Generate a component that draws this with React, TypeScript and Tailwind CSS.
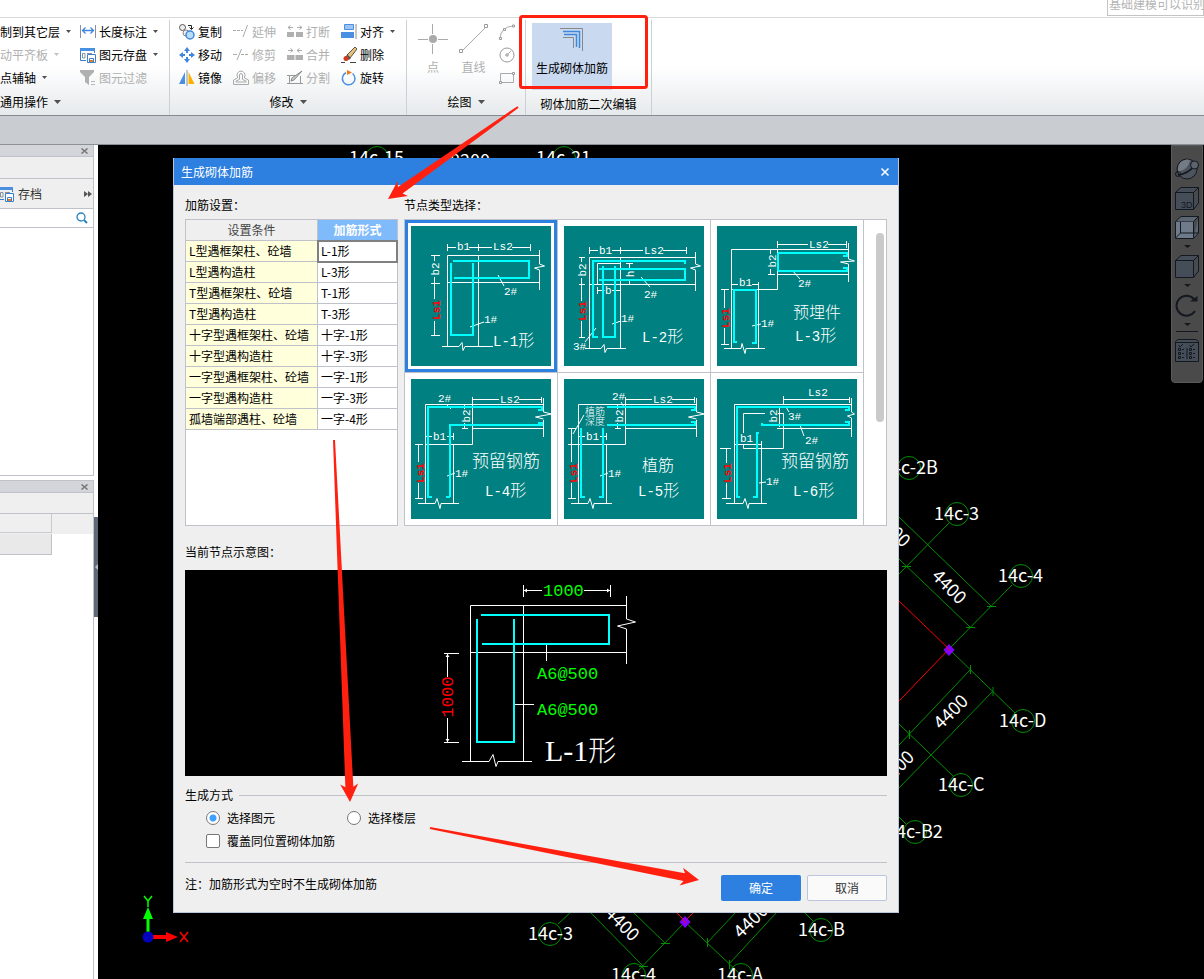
import React, { useState } from "react";

type Label = { x: number; y: number; t: string; size?: number; rot?: boolean; color?: string };

type NodeType = {
  id: string;
  lines: string;
  bars: string;
  labels: Label[];
};

const conditions = [
  ["L型遇框架柱、砼墙", "L-1形"],
  ["L型遇构造柱", "L-3形"],
  ["T型遇框架柱、砼墙", "T-1形"],
  ["T型遇构造柱", "T-3形"],
  ["十字型遇框架柱、砼墙", "十字-1形"],
  ["十字型遇构造柱", "十字-3形"],
  ["一字型遇框架柱、砼墙", "一字-1形"],
  ["一字型遇构造柱", "一字-3形"],
  ["孤墙端部遇柱、砼墙", "一字-4形"],
];

const nodeTypes: NodeType[] = [
  {
    id: "L-1形",
    lines:
      "M36.5 21.5H45M58 21.5H81M101 21.5H119.5M36.5 18v7M67.5 18v7M119.5 18v7M128.5 29.5H36.5V120.5M67.5 29.5V120.5M36.5 56.5H128.5M128.5 24V38M128.5 44V64M31 120.5H48l3 -4l1 8l2 -4H82M128.5 38l5 2l-10 2l5 2M20 29.5h9M20 57.5h9M20 109.5h9M23.5 29.5V35M23.5 51V73M23.5 95V109.5M87 49l6 11M59 101l14 -5",
    bars: "M42 35H118V52H43M40 37V109H62V37",
    labels: [
      { x: 46, y: 24, t: "b1" },
      { x: 82, y: 24, t: "Ls2" },
      { x: 24, y: 43, t: "b2", rot: true },
      { x: 25, y: 84, t: "Ls1", rot: true, color: "#f00" },
      { x: 93, y: 69, t: "2#" },
      { x: 73, y: 97, t: "1#" },
      { x: 82, y: 120, t: "L-1形", size: 16 },
    ],
  },
  {
    id: "L-2形",
    lines:
      "M25.5 24.5H34M48 24.5H79M99 24.5H122.5M25.5 21v7M56.5 21v7M122.5 21v7M131.5 31.5H25.5V122.5M56.5 31.5V122.5M25.5 58.5H131.5M33.5 58.5V37.5H56.5M131.5 26V38M131.5 44V65M131.5 38l5 2l-10 2l5 2M21 122.5H37l3 -4l1 8l2 -4H62M15 31.5h6M15 58.5h6M15 111.5h6M17.5 31.5V36M17.5 52V75M17.5 95V111M62 37.5h7M65.5 37.5v5M65.5 53v5M33.5 61v7M33.5 64.5h7M48 64.5h8M77 51l9 10M48 98l9 -3M32 102l-11 14",
    bars: "M34 111H29V35H121V38M35 43H121V54H35M39 40V111H51V40",
    labels: [
      { x: 35, y: 28, t: "b1" },
      { x: 80, y: 28, t: "Ls2" },
      { x: 18, y: 44, t: "b2", rot: true },
      { x: 66, y: 48, t: "h", rot: true },
      { x: 41, y: 68, t: "b" },
      { x: 18, y: 85, t: "Ls1", rot: true, color: "#f00" },
      { x: 80, y: 72, t: "2#" },
      { x: 57, y: 96, t: "1#" },
      { x: 9, y: 124, t: "3#" },
      { x: 78, y: 116, t: "L-2形", size: 16 },
    ],
  },
  {
    id: "L-3形",
    lines:
      "M60.5 18.5H91M111 18.5H129.5M60.5 15v7M129.5 15v7M131.5 23.5H14.5V122.5M60.5 23.5V63.5M60.5 48.5H131.5M131.5 17V33M131.5 38V56M131.5 33l6 2l-14 1l8 2M14.5 63.5H60.5M41.5 56V122.5M14.5 58.5H21M35 58.5h6M51 23.5h7M51 48.5h7M53.5 23.5V28M53.5 43v5M7 122.5H24l1 -5l3 10l1 -5H48M4 63.5h8M4 118.5h8M7.5 63.5V82M7.5 102V118M75 44l8 9M35 100l9 -2",
    bars: "M61 27H130V30H126M61 45H130V42H126M61 27V45M20 116H17V64H39V117H35",
    labels: [
      { x: 92, y: 22, t: "Ls2" },
      { x: 55, y: 35, t: "b2", rot: true },
      { x: 22, y: 60, t: "b1" },
      { x: 81, y: 61, t: "2#" },
      { x: 44, y: 101, t: "1#" },
      { x: 8, y: 92, t: "Ls1", rot: true, color: "#f00" },
      { x: 76, y: 92, t: "预埋件", size: 16 },
      { x: 78, y: 115, t: "L-3形", size: 16 },
    ],
  },
  {
    id: "L-4形",
    lines:
      "M61.5 20.5H88M108 20.5H130.5M130.5 18v6M132.5 25.5H14.5V124.5M61.5 18V65.5M61.5 49.5H132.5M132.5 19V33M132.5 41V58M132.5 33l8 2l-16 3l8 2M14.5 65.5H61.5M42.5 65.5V124.5M14.5 57.5H21M36 57.5h6M42.5 54v7M51 49.5h6M53.5 25.5V30M53.5 44v5M7 124.5H24l2 -5l3 10l1 -5H48M4 65.5h8M4 119.5h8M7.5 65.5V83M7.5 104V119M35 25l5 5M36 97l8 -3",
    bars: "M21 118H17V28H131V31H127M39 118H35M131 44H127M39 118V46H131V43",
    labels: [
      { x: 89, y: 24, t: "Ls2" },
      { x: 55, y: 37, t: "b2", rot: true },
      { x: 22, y: 61, t: "b1" },
      { x: 27, y: 23, t: "2#" },
      { x: 44, y: 98, t: "1#" },
      { x: 9, y: 94, t: "Ls1", rot: true, color: "#f00" },
      { x: 61, y: 88, t: "预留钢筋", size: 17 },
      { x: 74, y: 117, t: "L-4形", size: 16 },
    ],
  },
  {
    id: "L-5形",
    lines:
      "M61.5 20.5H88M108 20.5H130.5M130.5 18v6M132.5 25.5H14.5V124.5M61.5 18V65.5M61.5 49.5H132.5M132.5 19V33M132.5 41V58M132.5 33l8 2l-16 3l8 2M4 65.5H61.5M42.5 65.5V124.5M14.5 57.5H21M36 57.5h6M42.5 54v7M51 49.5h6M53.5 25.5V30M53.5 44v5M7 124.5H24l2 -5l3 10l1 -5H48M4 49.5h8M4 119.5h8M7.5 49.5V83M7.5 104V119M57 23l3 5M20 36l-11 19M36 97l8 -3",
    bars: "M43 28H131V31H127M43 46H131V43H127M17 49V118H21M39 49V118H35",
    labels: [
      { x: 89, y: 24, t: "Ls2" },
      { x: 55, y: 37, t: "b2", rot: true },
      { x: 22, y: 61, t: "b1" },
      { x: 48, y: 21, t: "2#" },
      { x: 44, y: 98, t: "1#" },
      { x: 21, y: 36, t: "植筋", size: 10 },
      { x: 21, y: 46, t: "深度", size: 10 },
      { x: 9, y: 94, t: "Ls1", rot: true, color: "#f00" },
      { x: 78, y: 92, t: "植筋", size: 16 },
      { x: 74, y: 117, t: "L-5形", size: 16 },
    ],
  },
  {
    id: "L-6形",
    lines:
      "M66.5 20.5H132.5M66.5 17v8M132.5 18v6M134.5 25.5H17.5V124.5M60 49.5H134.5M134.5 19V33M134.5 39V58M134.5 33l3 2l-7 2l4 2M48 34.5H26.5V54M26.5 65V69.5H66.5V34.5H61M44.5 62V124.5M17.5 65.5H44.5M62.5 28V48M9 124.5H26l2 -5l3 10l1 -5H50M3 69.5h11M5 119.5h9M9.5 69.5V84M9.5 104V119M69 28l3 5M83 46l4 11M42 104l7 -1",
    bars: "M23 118H20V28H132V31H128M45 44V46H132V43H128M42 54H40V118H36",
    labels: [
      { x: 91, y: 17, t: "Ls2" },
      { x: 56, y: 37, t: "b2", rot: true },
      { x: 23, y: 63, t: "b1" },
      { x: 71, y: 41, t: "3#" },
      { x: 88, y: 65, t: "2#" },
      { x: 49, y: 106, t: "1#" },
      { x: 10, y: 94, t: "Ls1", rot: true, color: "#f00" },
      { x: 64, y: 88, t: "预留钢筋", size: 17 },
      { x: 76, y: 117, t: "L-6形", size: 16 },
    ],
  },
];

/* grid axis bubbles of the model: centre of the circle, then the start of the text */
const bubbles: [number, number, number, string][] = [
  [377, 158, 349, "14c-15"],
  [564, 158, 536, "14c-21"],
  [909, 468, 881, "14c-2B"],
  [957, 514, 934, "14c-3"],
  [1021, 576, 998, "14c-4"],
  [1023, 721, 999, "14c-D"],
  [961, 785, 938, "14c-C"],
  [915, 832, 886, "14c-B2"],
  [550, 934, 528, "14c-3"],
  [634, 975, 611, "14c-4"],
  [741, 975, 717, "14c-A"],
  [821, 930, 798, "14c-B"],
];

const spans: [number, number, number][] = [
  [949, 587, 45],
  [951, 712, -45],
  [893, 530, 45],
  [897, 768, -45],
  [622, 924, 45],
  [751, 921, -45],
];

function Caret({ off, small }: { off?: boolean; small?: boolean }) {
  return (
    <svg width={small ? 5 : 7} height={small ? 3 : 4} viewBox="0 0 7 4" className="shrink-0">
      <path d="M0 0H7L3.5 4Z" fill={off ? "#c0c0c0" : "#505050"} />
    </svg>
  );
}

function Icon({ children, size = 16 }: { children: React.ReactNode; size?: number }) {
  return (
    <svg width={size} height={size} viewBox={`0 0 ${size} ${size}`} fill="none" className="shrink-0">
      {children}
    </svg>
  );
}

function Tool({ icon, text, caret, off }: { icon?: React.ReactNode; text: string; caret?: boolean; off?: boolean }) {
  return (
    <button type="button" disabled={off} className="flex h-[23px] items-center whitespace-nowrap disabled:text-[#b0b0b0]">
      {icon && <span className="mr-[3px]">{icon}</span>}
      {text}
      {caret && (
        <span className="ml-[6px]">
          <Caret off={off} small />
        </span>
      )}
    </button>
  );
}

function GroupLabel({ text, caret }: { text: string; caret?: boolean }) {
  return (
    <div className="flex h-[26px] items-center justify-center gap-[6px] whitespace-nowrap">
      {text}
      {caret && <Caret />}
    </div>
  );
}

const SaveIcon = () => (
  <Icon>
    <path d="M.5 13.5V1.5H14.5V6M.5 13.5H6" stroke="#3a7fd0" />
    <path d="M0 1H15V4H0Z" fill="#4a90e2" />
    <path d="M2.5 6.5H5V11H2.5ZM7 6.5H12" stroke="#8a9099" />
    <path d="M7.5 7.5H15.5V15.5H7.5Z" fill="#fff" stroke="#3a7fd0" />
    <path d="M9.5 11.5h4v4h-4Z" fill="#fff" stroke="#3a7fd0" />
    <path d="M10 13h3v2h-3Z" fill="#f07818" />
  </Icon>
);

function Ribbon() {
  return (
    <div className="flex h-[99px] border-t border-b border-t-[#d9d9d9] border-b-[#868b93] bg-linear-to-b from-white from-50% to-[#e6eaec] pt-[2px]">
      <section className="w-[170px] border-r border-[#cdd0d3]">
        <div className="grid grid-cols-[80px_auto] justify-items-start">
          <Tool text="制到其它层" caret />
          <Tool
            text="长度标注"
            caret
            icon={
              <Icon>
                <path d="M.5 1V14M15.5 1V14" stroke="#8a9099" />
                <path d="M3 6.5H13M5.5 3.5L2.5 6.5L5.5 9.5M10.5 3.5L13.5 6.5L10.5 9.5" stroke="#3f87dc" strokeWidth="1.3" />
              </Icon>
            }
          />
          <Tool text="动平齐板" caret off />
          <Tool text="图元存盘" caret icon={<SaveIcon />} />
          <Tool text="点辅轴" caret />
          <Tool
            text="图元过滤"
            off
            icon={
              <Icon>
                <path d="M0 0H14V2L9 7V15L5 12V7L0 2Z" fill="#b0b0b0" />
                <path d="M11 11.5h4M11 14.5h4" stroke="#b8b8b8" />
              </Icon>
            }
          />
        </div>
        <div className="flex h-[26px] items-center gap-[6px]">
          通用操作 <Caret />
        </div>
      </section>

      <section className="w-[237px] border-r border-[#cdd0d3]">
        <div className="grid grid-cols-[54px_54px_54px_auto] justify-items-start pl-[9px]">
          <Tool
            text="复制"
            icon={
              <Icon>
                <circle cx="3.5" cy="3.5" r="3" fill="#eee" stroke="#555" />
                <circle cx="7" cy="9" r="3" fill="#eee" stroke="#888" />
                <circle cx="11" cy="11" r="4" fill="#b8dcf7" stroke="#3f87dc" strokeWidth="1.5" />
                <path d="M9 1.5h3.5V5M10.5 3.5l2 2l2 -2" stroke="#222" />
              </Icon>
            }
          />
          <Tool
            text="延伸"
            off
            icon={
              <Icon>
                <path d="M0 6.5H10" stroke="#aaa" strokeDasharray="3 1" />
                <path d="M14.5 1L10 13" stroke="#aaa" />
              </Icon>
            }
          />
          <Tool
            text="打断"
            off
            icon={
              <Icon>
                <path d="M0 8h7v5H0ZM9 8h7v5H9Z" fill="#b0b0b0" />
                <path d="M1 3.5h5M3.5 1.5L1 3.5L3.5 5.5M10 3.5h5M12.5 1.5L15 3.5L12.5 5.5" stroke="#aaa" />
              </Icon>
            }
          />
          <Tool
            text="对齐"
            caret
            icon={
              <Icon>
                <path d="M3.5 .5h9v5h-9Z" fill="#9cc3f2" stroke="#4a90e2" />
                <path d="M0 8h13v6H0Z" fill="#4a90e2" />
                <path d="M15 0V15" stroke="#8a9099" />
              </Icon>
            }
          />
          <Tool
            text="移动"
            icon={
              <Icon>
                <path d="M8 0l3 4H5ZM8 16l3 -4H5ZM0 8l4 -3v6ZM16 8l-4 -3v6Z" fill="#3f87dc" />
                <path d="M8 3V6M8 10V13M3 8H6M10 8H13" stroke="#3f87dc" strokeWidth="2" />
              </Icon>
            }
          />
          <Tool
            text="修剪"
            off
            icon={
              <Icon>
                <path d="M0 7.5H4M8 7.5h3M12 7.5h3" stroke="#aaa" />
                <path d="M8.5 2L4 13" stroke="#aaa" />
              </Icon>
            }
          />
          <Tool
            text="合并"
            off
            icon={
              <Icon>
                <path d="M0 8h7.5v5H0ZM8.5 8h7.5v5H8.5Z" fill="#b0b0b0" />
                <path d="M1 3.5h5M3.5 1.5L6 3.5L3.5 5.5M10 3.5h5M12.5 1.5L10 3.5L12.5 5.5" stroke="#aaa" />
              </Icon>
            }
          />
          <Tool
            text="删除"
            icon={
              <Icon>
                <path d="M14 0l2 2l-7 9l-3 -3Z" fill="#e8c07a" stroke="#554" />
                <path d="M6.5 7.5l3.5 3.5l-2 2l-4 -3Z" fill="#555" />
                <circle cx="5" cy="11.5" r="2.5" fill="#d23c1c" />
                <path d="M0 15.5H4M9 15.5H15" stroke="#444" />
              </Icon>
            }
          />
          <Tool
            text="镜像"
            icon={
              <Icon>
                <path d="M6 2V14H0Z" fill="#4a90e2" />
                <path d="M9.5 2V14H15.5Z" fill="#fbb000" />
                <path d="M8 0V16" stroke="#8a9099" />
              </Icon>
            }
          />
          <Tool
            text="偏移"
            off
            icon={
              <Icon>
                <path d="M.5 14.5V10L4.500 8V7A4 4 0 1 1 11.5 7V8L15.5 10V14.5Z" stroke="#aaa" />
                <path d="M3 12H13M3 12V11L6.5 9.5V5a1.5 1.5 0 0 1 3 0V9.5L13 11V12" stroke="#aaa" />
              </Icon>
            }
          />
          <Tool
            text="分割"
            off
            icon={
              <Icon>
                <path d="M2.5 5.5H8M13.5 6V13.5H2.5V5.5M0 5.5h4M0 13.5h16" stroke="#999" />
                <path d="M15 1L7 10L4 11L5 8Z" fill="#ccc" stroke="#888" />
              </Icon>
            }
          />
          <Tool
            text="旋转"
            icon={
              <Icon>
                <path d="M11.5 3.5A6.3 6.3 0 1 1 5 2.8" stroke="#4a90e2" strokeWidth="1.5" />
                <path d="M6 0L11 2.5L6 5Z" fill="#f07818" />
              </Icon>
            }
          />
        </div>
        <GroupLabel text="修改" caret />
      </section>

      <section className="w-[119px] border-r border-[#cdd0d3]">
        <div className="flex h-[69px] justify-between pr-[10px] pl-[11px]">
          <button type="button" disabled className="flex w-[30px] flex-col items-center gap-[5px] pt-1 text-[#b0b0b0]">
            <Icon size={30}>
              <path d="M14.500 0V10M14.500 20V30M0 15.500H10M20 15.500H30" stroke="#aaa" />
              <circle cx="15" cy="15" r="4" fill="#aaa" />
            </Icon>
            <span className="leading-4">点</span>
          </button>
          <button type="button" disabled className="flex w-[30px] flex-col items-center gap-[5px] pt-1 text-[#b0b0b0]">
            <Icon size={30}>
              <path d="M3 27L27 3" stroke="#aaa" />
              <path d="M.5 25.5h3v3h-3ZM25.5 .5h3v3h-3Z" fill="#fff" stroke="#999" />
            </Icon>
            <span className="leading-4 whitespace-nowrap">直线</span>
          </button>
          <div className="flex flex-col">
            <button type="button" aria-label="弧" className="flex h-[23px] items-center">
              <Icon>
                <path d="M1 14Q2 3 14 2" stroke="#aaa" />
                <path d="M.5 13.5h2v2h-2ZM4.5 4.5h2v2h-2ZM13.5 1h2v2h-2Z" fill="#fff" stroke="#999" />
              </Icon>
            </button>
            <button type="button" aria-label="圆" className="flex h-[23px] items-center">
              <Icon>
                <circle cx="8" cy="8" r="7" stroke="#999" />
                <path d="M8 8L12 4" stroke="#aaa" />
                <path d="M7 7h2v2H7Z" fill="#fff" stroke="#999" />
              </Icon>
            </button>
            <button type="button" aria-label="矩形" className="flex h-[23px] items-center">
              <Icon>
                <path d="M1.5 3.5H14.5V12.5H1.5Z" stroke="#aaa" />
                <path d="M.5 11.5h2v2h-2ZM13.5 2.5h2v2h-2Z" fill="#fff" stroke="#999" />
              </Icon>
            </button>
          </div>
        </div>
        <GroupLabel text="绘图" caret />
      </section>

      <section className="w-[126px] border-r border-[#cdd0d3]">
        <div className="h-[71px] pt-[3px] pl-[6px]">
          <button type="button" className="flex h-[67px] w-20 flex-col items-center gap-2 bg-[#c9daf0] pt-[5px] whitespace-nowrap">
            <Icon size={24}>
              <path d="M0 .5H22.500V23M3 9.500H13.500V20" stroke="#888" />
              <path d="M3 3.5H19.500V20M4 6.5H16.500V19" stroke="#3f87dc" strokeWidth="1.500" />
            </Icon>
            <span className="leading-4">生成砌体加筋</span>
          </button>
        </div>
        <GroupLabel text="砌体加筋二次编辑" />
      </section>
    </div>
  );
}

function PanelHead() {
  return (
    <div className="flex h-3 items-center justify-end border-b border-[#bfc2c9] bg-[#d3d5da] pr-[5px]">
      <button type="button" aria-label="关闭" className="flex">
        <svg width="7" height="6" viewBox="0 0 7 6">
          <path d="M.5 .5L6.5 5.5M6.5 .5L.5 5.5" stroke="#777" strokeWidth="1.5" />
        </svg>
      </button>
    </div>
  );
}

function SidePanel() {
  return (
    <aside className="flex w-[98px] shrink-0 bg-white">
      <div className="flex flex-1 flex-col">
        <div className="flex h-[331px] flex-col border-r border-b border-[#bfc2c9]">
          <PanelHead />
          <div className="h-[22px] border-b border-[#bfc2c9] bg-[#efefef]" />
          <div className="flex h-[30px] items-center justify-between border-b border-[#bfc2c9] bg-[#efefef] pr-px">
            <button type="button" className="flex items-center gap-1 text-[#333]">
              <span className="-ml-[2px]">
                <SaveIcon />
              </span>
              存档
            </button>
            <svg width="8" height="6" viewBox="0 0 8 6">
              <path d="M0 0L4 3L0 6ZM4 0L8 3L4 6Z" fill="#555" />
            </svg>
          </div>
          <label className="flex h-[19px] items-center border-b border-[#bfc2c9] pr-[5px]">
            <input type="text" aria-label="搜索" className="w-0 flex-1 outline-none" />
            <svg width="12" height="12" viewBox="0 0 12 12" fill="none" stroke="#2a85c0">
              <circle cx="5" cy="5" r="4" strokeWidth="1.3" />
              <path d="M8 8L11 11" strokeWidth="2" />
            </svg>
          </label>
        </div>
        <div className="mt-1 flex flex-1 flex-col border-t border-r border-[#bfc2c9]">
          <PanelHead />
          <div className="h-[21px] border-b border-[#bfc2c9] bg-[#efefef]" />
          <div className="h-5 bg-[#efefef]">
            <div className="h-[19px] w-[52px] border-r border-b border-[#c9cbd0]" />
          </div>
          <div className="h-[21px] w-[52px] border-r border-b border-[#bfc2c9] bg-[#e9e9e9]" />
        </div>
      </div>
      <div className="w-1 pt-[372px]">
        <div className="flex h-[100px] items-center bg-[#5f6a78]">
          <svg width="4" height="6" viewBox="0 0 4 6">
            <path d="M4 0V6L1 3Z" fill="#b8bec6" />
          </svg>
        </div>
      </div>
    </aside>
  );
}

function Model() {
  return (
    <svg
      className="absolute inset-0 h-full w-full"
      fill="none"
      fontFamily="'Noto Sans CJK SC', sans-serif"
      fontSize="18"
    >
      <g transform="translate(-98 -145)">
        <path
          stroke="#009000"
          d="M899 517L991 606M899 559L970 627M949 523L899 574M1012 585L949 649L1015 713M970 670L899 745M993 691L899 788M899 724L953 776M899 817L907 825M902 566.5h9M987 606.5h9M966 627.5h9M970.5 665v9M993 687v9M909.5 730v9M558 924L571 912M590 912L643 966M633 912L665 943M685 922L634 975M685 922L741 975M707 943L736 912M729 964L777 912M804 912L813 921M661 943.5h9M639 966.5h9M707.5 938v9M729.5 960v9"
        />
        <path stroke="#f00" d="M899 601L949 649L899 701M676 912L685 921L694 912" />
        {bubbles.map(([cx, cy, x, t]) => (
          <g key={`${cx}-${cy}`}>
            <circle cx={cx} cy={cy} r="11.5" stroke="#009000" />
            <text x={x} y={cy + 6} fill="#fff">
              {t}
            </text>
          </g>
        ))}
        <text x="450" y="167" fill="#fff">
          8200
        </text>
        {spans.map(([x, y, r]) => (
          <text key={`${x}-${y}`} transform={`translate(${x} ${y}) rotate(${r})`} textAnchor="middle" y="6" fill="#fff">
            4400
          </text>
        ))}
        <path d="M949 644l5.5 6l-5.5 6l-5.5 -6ZM685 916l5.5 6l-5.5 6l-5.5 -6Z" fill="#8000ff" />
        <path d="M946 647l4 4M682 919l4 4" stroke="#f00" />
        {/* UCS axes */}
        <path d="M148 936V915" stroke="#0f0" strokeWidth="3" />
        <path d="M148 907l5 12h-10Z" fill="#0f0" />
        <path d="M148 937H168" stroke="#f00" strokeWidth="4" />
        <path d="M178 937l-12 -5v10Z" fill="#f00" />
        <circle cx="148" cy="937" r="5.5" fill="#0000c0" />
        <path d="M144 896l4 5l4 -5M148 901v6" stroke="#0f0" strokeWidth="1.5" />
        <path d="M180 932l8 10M188 932l-8 10" stroke="#f00" strokeWidth="1.5" />
      </g>
    </svg>
  );
}

function ViewTools() {
  const stroke = "#14181f";
  return (
    <div className="absolute top-0 right-px flex h-[238px] w-8 flex-col items-center rounded-b-sm border border-[#5a5a5a] bg-[#4a4a4a] pt-[11px]">
      <button type="button" aria-label="动态观察" className="flex h-[29px]">
        <Icon size={24}>
          <circle cx="12" cy="12" r="10" fill="#4d545e" stroke={stroke} />
          <path d="M3 11A9.500 9.500 0 0 1 15 3Q14 12 3 15Z" fill="#747b84" />
          <path d="M3 18Q13 17 20 8" stroke={stroke} strokeWidth="1.5" />
          <circle cx="19.500" cy="8" r="4" fill="#5c646e" stroke={stroke} />
          <circle cx="3" cy="17" r="2.5" stroke={stroke} />
        </Icon>
      </button>
      <button type="button" aria-label="三维" className="flex h-[29px]">
        <Icon size={24}>
          <path d="M.5 6.5H18.5V23.5H.5ZM.5 6.5L6 1.5H23.5L18.5 6.5M23.5 1.5V17L18.5 23.5" fill="#454d59" stroke={stroke} />
          <text x="6" y="22" fontSize="9" fill={stroke} fontFamily="Liberation Sans, sans-serif">
            3D
          </text>
        </Icon>
      </button>
      <button type="button" aria-label="线框" className="flex h-[39px] flex-col items-center gap-[6px]">
        <Icon size={24}>
          <path d="M.5 6.5H18.5V23.5H.5Z" fill="#6f7b8a" stroke={stroke} />
          <path d="M.5 6.5L6 1.5H23.5L18.5 6.5M23.5 1.5V18L18.5 23.5" fill="#5b6675" stroke={stroke} />
          <path d="M5.5 7V18H23M.5 23L5.5 18" stroke={stroke} />
        </Icon>
        <svg width="7" height="3">
          <path d="M0 0H7L3.5 3Z" fill={stroke} />
        </svg>
      </button>
      <button type="button" aria-label="实体" className="flex h-[39px] flex-col items-center gap-[6px]">
        <Icon size={24}>
          <path d="M.5 6.5H18.5V23.5H.5ZM.5 6.5L6 1.5H23.5L18.5 6.5M23.5 1.5V17L18.5 23.5" fill="#454d59" stroke={stroke} />
        </Icon>
        <svg width="7" height="3">
          <path d="M0 0H7L3.5 3Z" fill={stroke} />
        </svg>
      </button>
      <button type="button" aria-label="旋转视图" className="flex h-[38px] flex-col items-center gap-[6px]">
        <Icon size={24}>
          <path d="M20 18A10 10 0 1 1 19 6" stroke={stroke} strokeWidth="2" />
          <path d="M15 8.500h7.500V3Z" fill={stroke} />
        </Icon>
        <svg width="7" height="3">
          <path d="M0 0H7L3.5 3Z" fill={stroke} />
        </svg>
      </button>
      <div className="mb-[6px] h-px w-[22px] bg-[#14181f]" />
      <button type="button" aria-label="显示设置" className="flex">
        <Icon size={24}>
          <path d="M.5 3.5L3 1.5H21L23.5 3.5V23.5H.5ZM.5 4.5H23.5M12 10V21" fill="#454d59" stroke={stroke} />
          <path
            d="M3.5 7l1.5 2l3 -3M14.5 7l1.5 2l3 -3M3.5 10.5h2v2h-2ZM3.5 14.5h2v2h-2ZM3.5 18.5h2v2h-2ZM14.5 10.5h2v2h-2ZM14.5 14.5h2v2h-2ZM14.5 18.5h2v2h-2ZM7 11.5h2M7 15.5h2M7 19.5h2M18 11.5h2M18 15.5h2M18 19.5h2"
            stroke={stroke}
          />
        </Icon>
      </button>
    </div>
  );
}

/* latin glyphs take half the width of a Chinese one, so the size follows the run */
function NodeText({ l }: { l: Label }) {
  const size = l.size ?? 12;
  const latin = size > 12 ? 14 : 11;
  const runs = l.t.split(/([\u4e00-\u9fff]+)/).filter(Boolean);
  const place = l.rot
    ? { transform: `translate(${l.x + 4} ${l.y}) rotate(-90)`, textAnchor: "middle" as const }
    : { x: l.x, y: l.y };
  return (
    <text {...place} fill={l.color ?? "#fff"} fontWeight={l.color ? 700 : 300}>
      {runs.map((r) => (
        <tspan key={r} fontSize={/[\u4e00-\u9fff]/.test(r) ? size : latin}>
          {r}
        </tspan>
      ))}
    </text>
  );
}

function NodeThumb({ node }: { node: NodeType }) {
  return (
    <svg
      width="140"
      height="140"
      viewBox="0 0 140 140"
      fill="none"
      fontFamily="'Liberation Mono', 'Noto Sans CJK SC', monospace"
      className="bg-[#008080]"
    >
      <path d={node.lines} stroke="#fff" />
      <path d={node.bars} stroke="#0ff" strokeWidth="2" />
      {node.labels.map((l) => (
        <NodeText key={l.t + l.y} l={l} />
      ))}
    </svg>
  );
}

function Preview() {
  return (
    <div className="bg-black">
      <svg
        viewBox="-4 0 240 206"
        fill="none"
        fontFamily="'Liberation Mono', 'Noto Sans CJK SC', monospace"
        className="mx-auto h-[206px] w-[240px]"
      >
        <path
          stroke="#fff"
          d="M206.5 35.5H50.5V191.5M103.5 35.5V191.5M50.5 82.5H206.5M206.5 26V49M206.5 59V94M206.5 49l9 3l-18 4l9 3M42 191.5H69l4 -7l3 12l2 -5H112M103.5 15v12M190.5 15v12M103.5 20.5H122M164 20.5H190.5M24 83.5H39M24 172.5H39M27.5 83.5V107M27.5 148V172.5M126.5 74V91M95 134.5H114"
        />
        <path d="M104 20.5l3 -2v4ZM190 20.5l-3 -2v4ZM27.5 84l-2 3h4ZM27.5 172l-2 -3h4Z" fill="#fff" />
        <path d="M61 45H189V74H62M57 49V172H94V49" stroke="#0ff" strokeWidth="2" />
        <g fill="#0f0" fontSize="17">
          <text x="123" y="26">
            1000
          </text>
          <text x="117" y="109">
            A6@500
          </text>
          <text x="117" y="145">
            A6@500
          </text>
        </g>
        <text transform="translate(33 127) rotate(-90)" textAnchor="middle" fill="#f00" fontSize="17">
          1000
        </text>
        <text x="125" y="191" fill="#fff" fontSize="30" fontFamily="'Liberation Serif', 'Noto Sans CJK SC', serif" fontWeight="300">
          L-1
          <tspan fontSize="28">形</tspan>
        </text>
      </svg>
    </div>
  );
}

function Dialog() {
  const [selected, setSelected] = useState("L-1形");
  const [mode, setMode] = useState("element");

  return (
    <div role="dialog" aria-label="生成砌体加筋" className="absolute top-[13px] left-[75px] w-[726px] border border-t-0 border-[#b9c6dc] bg-[#efefef]">
      <div className="flex h-[27px] items-center justify-between bg-[#2d7fe0] pr-2 pl-[7px] text-white">
        <span>生成砌体加筋</span>
        <button type="button" aria-label="关闭" className="flex">
          <svg width="10" height="10" viewBox="0 0 10 10">
            <path d="M1.5 1.5L8.5 8.5M8.5 1.5L1.5 8.5" stroke="#fff" strokeWidth="1.5" />
          </svg>
        </button>
      </div>

      <div className="px-[11px]">
        <div className="flex gap-[6px]">
          <div className="flex w-[213px] flex-col">
            <div className="flex h-[34px] items-center pt-[6px]">加筋设置：</div>
            <div className="flex-1 border border-[#bfc2c9] bg-white">
              <table className="w-full table-fixed border-separate border-spacing-0">
                <thead>
                  <tr>
                    <th className="h-[21px] w-[132px] border-r border-b border-[#bfc2c9] bg-[#efefef] p-0 font-normal text-[#444]">设置条件</th>
                    <th className="border-b border-[#5b9bea] bg-[#7fbafa] p-0 text-white">加筋形式</th>
                  </tr>
                </thead>
                <tbody>
                  {conditions.map(([name, form], i) => (
                    <tr key={name}>
                      <td className="h-[21px] border-r border-b border-[#bfc2c9] bg-[#ffffdb] py-0 pr-0 pl-[3px] leading-4 whitespace-nowrap">{name}</td>
                      <td
                        className={
                          i === 0
                            ? "border-b border-[#bfc2c9] py-0 pl-[3px] leading-4 outline-2 -outline-offset-1 outline-[#808080]"
                            : "border-b border-[#bfc2c9] py-0 pl-[3px] leading-4"
                        }
                      >
                        {form}
                      </td>
                    </tr>
                  ))}
                </tbody>
              </table>
            </div>
          </div>

          <div className="flex-1">
            <div className="flex h-[34px] items-center pt-[6px]">节点类型选择：</div>
            <div className="flex justify-between border-t border-r border-l border-[#bfc2c9] bg-white">
              <div className="grid grid-cols-[153px_153px_153px]">
                {nodeTypes.map((n) => (
                  <div key={n.id} className="h-[153px] border-r border-b border-[#bfc2c9]">
                    <button
                      type="button"
                      aria-label={n.id}
                      onClick={() => setSelected(n.id)}
                      className={n.id === selected ? "block border-3 border-[#2d7fe0] p-[3px]" : "block p-[6px]"}
                    >
                      <NodeThumb node={n} />
                    </button>
                  </div>
                ))}
              </div>
              <div className="flex-1 border-b border-[#bfc2c9] pt-[13px] pl-3">
                <div className="h-[189px] w-2 rounded-full bg-[#cacaca]" />
              </div>
            </div>
          </div>
        </div>

        <div className="flex h-[44px] items-center pt-2">当前节点示意图：</div>
        <Preview />

        <fieldset className="mt-[9px] border-t border-[#bfc2c9]">
          <legend className="pr-[6px] leading-5">生成方式</legend>
          <div className="pt-px pb-[10px] pl-[21px]">
            <div className="flex h-6 items-center">
              <label className="flex w-[141px] items-center gap-[7px]">
                <input
                  type="radio"
                  name="mode"
                  checked={mode === "element"}
                  onChange={() => setMode("element")}
                  className="size-[14px] appearance-none rounded-full border border-[#777] bg-white checked:bg-[radial-gradient(circle,#409eff_0_3px,white_4px)]"
                />
                选择图元
              </label>
              <label className="flex items-center gap-[7px]">
                <input
                  type="radio"
                  name="mode"
                  checked={mode === "floor"}
                  onChange={() => setMode("floor")}
                  className="size-[14px] appearance-none rounded-full border border-[#777] bg-white checked:bg-[radial-gradient(circle,#409eff_0_3px,white_4px)]"
                />
                选择楼层
              </label>
            </div>
            <label className="flex h-[22px] items-center gap-[7px]">
              <input type="checkbox" className="size-[14px] appearance-none rounded-[2px] border border-[#777] bg-white checked:bg-[#409eff]" />
              覆盖同位置砌体加筋
            </label>
          </div>
        </fieldset>

        <div className="flex items-start justify-between border-t border-[#bfc2c9] pt-[12px] pb-[11px]">
          <p className="leading-[18px]">注：加筋形式为空时不生成砌体加筋</p>
          <div className="flex gap-[6px]">
            <button type="button" className="h-[26px] w-20 rounded-[2px] bg-[#2d7fe0] text-white">
              确定
            </button>
            <button type="button" className="h-[26px] w-20 rounded-[2px] border border-[#b9c6dc] bg-[#fafafa] text-[#333]">
              取消
            </button>
          </div>
        </div>
      </div>
    </div>
  );
}

/* long tapered arrow with a swept-back head */
function Arrow({ from, to }: { from: [number, number]; to: [number, number] }) {
  const [x1, y1] = from;
  const [x2, y2] = to;
  const len = Math.hypot(x2 - x1, y2 - y1);
  const dx = (x2 - x1) / len;
  const dy = (y2 - y1) / len;
  const at = (back: number, side: number) => `${x2 - dx * back - dy * side},${y2 - dy * back + dx * side}`;
  const points = [at(len, 1), at(15, 4), at(18, 9), at(0, 0), at(18, -9), at(15, -4), at(len, -1)];
  return <polygon points={points.join(" ")} fill="#ff2010" />;
}

export default function App() {
  return (
    <div className="relative flex min-h-screen flex-col overflow-hidden bg-white font-['Noto_Sans_CJK_SC',sans-serif] text-[12px] leading-4 text-black">
      <header>
        <div className="flex h-[17px] items-end justify-end overflow-hidden pb-px">
          <input
            type="text"
            aria-label="搜索"
            placeholder="基础建模可以识别CAD图吗"
            className="h-[26px] w-[97px] shrink-0 border border-[#c4c4c4] bg-white pl-px placeholder:text-[#b4b4b4]"
          />
        </div>
        <Ribbon />
        <div className="h-[29px] border-b border-[#8b8f96] bg-[#c9ccd0]" />
      </header>

      <main className="flex flex-1">
        <SidePanel />
        <div className="relative flex-1 overflow-hidden bg-black">
          <Model />
          <ViewTools />
          <Dialog />
        </div>
      </main>

      <svg className="pointer-events-none absolute inset-0 h-full w-full" fill="none">
        <rect x="520.5" y="16.5" width="126" height="71" rx="2" stroke="#ff2010" strokeWidth="3" />
        <Arrow from={[518, 107]} to={[388, 199]} />
        <Arrow from={[334, 440]} to={[350, 802]} />
        <Arrow from={[430, 828]} to={[699, 880]} />
      </svg>
    </div>
  );
}
